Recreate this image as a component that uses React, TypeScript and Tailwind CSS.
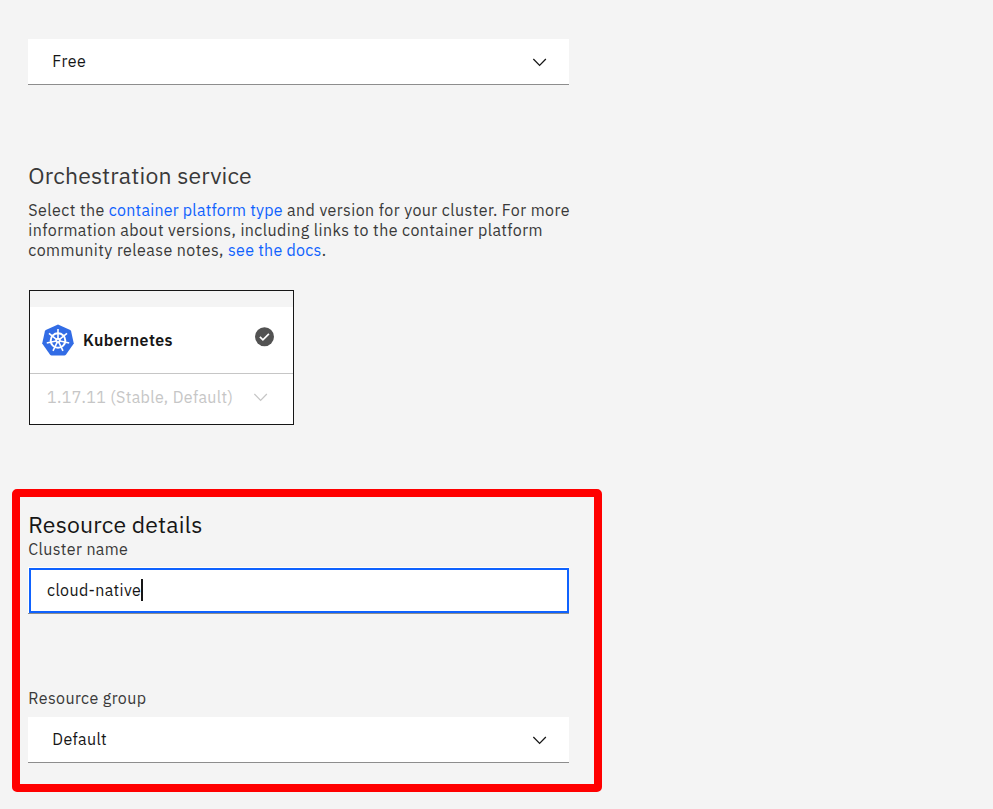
import type { ReactNode } from 'react';

function Chevron({ className }: { className: string }) {
  return (
    <svg className={className} width="16" height="16" viewBox="0 0 16 16" fill="currentColor">
      <path d="M7.6 12.2 .9 5.5 1.8 4.6 7.6 10.4 13.4 4.6 14.3 5.5Z" />
    </svg>
  );
}

function Select({ children }: { children: ReactNode }) {
  return (
    <div className="flex h-[46px] w-[541px] items-center justify-between border-b border-[#8d8d8d] bg-white pr-[21px] pl-[24.3px] text-[#161616]">
      <span className="pb-0.5">{children}</span>
      <Chevron className="mt-px" />
    </div>
  );
}

function KubernetesLogo() {
  const spokes = [0, 1, 2, 3, 4, 5, 6];
  return (
    <svg width="32" height="32" viewBox="0 0 32 32">
      <path
        d="M16 .4 28.2 6.1Q28.9 6.5 29.1 7.3L31.8 19.5 23.9 30.7Q23.3 31.4 22.4 31.4H9.6Q8.7 31.4 8.1 30.7L.2 19.5 2.9 7.3Q3.1 6.5 3.8 6.1Z"
        fill="#326ce5"
      />
      <g fill="none" stroke="#fff">
        <circle cx="16" cy="16.5" r="7.3" strokeWidth="2" />
        {spokes.map((i) => (
          <path key={i} d="M16 14.5V5" strokeWidth="1.6" transform={`rotate(${(i * 360) / 7} 16 16.5)`} />
        ))}
      </g>
      <circle cx="16" cy="16.5" r="2.7" fill="#fff" />
      <circle cx="16" cy="16.5" r="0.8" fill="#326ce5" />
    </svg>
  );
}

export default function App() {
  return (
    <main className="h-[809px] w-[993px] overflow-hidden bg-[#f4f4f4] pt-[39px] font-['IBM_Plex_Sans',Roboto,sans-serif] text-[16px] leading-5 text-[#393939]">
      <div className="pl-7">
        <Select>
          <span className="tracking-[0.5px]">Free</span>
        </Select>
        <h2 className="mt-[76px] pl-[0.3px] text-[23px] leading-7 tracking-[0.15px]">Orchestration service</h2>
        <p className="mt-[11px] pl-[0.3px] whitespace-nowrap">
          <span className="block tracking-[0.42px]">
            Select the <a className="tracking-[0.23px] text-[#0f62fe]">container platform type</a> and version for your cluster. For more
          </span>
          <span className="block tracking-[0.42px]">information about versions, including links to the container platform</span>
          <span className="block tracking-[0.42px]">
            community release notes, <a className="tracking-[0.26px] text-[#0f62fe]">see the docs</a>.
          </span>
        </p>
        <section className="mt-[30px] ml-px flex h-[135px] w-[265px] flex-col border border-[#161616] bg-white">
          <div className="h-4 bg-[#f4f4f4]" />
          <div className="flex h-[67px] items-center border-b border-[#c6c6c6] pl-3">
            <KubernetesLogo />
            <span className="ml-[9px] w-[172px] font-semibold tracking-[0.4px] text-[#161616]">Kubernetes</span>
            <svg className="-mt-[7px]" width="20" height="20" viewBox="0 0 20 20">
              <circle cx="9.5" cy="9.7" r="9.5" fill="#525252" />
              <path d="m4.9 9.9 3 3 6-6" fill="none" stroke="#fff" strokeWidth="1.7" />
            </svg>
          </div>
          <div className="flex flex-1 items-center pb-1 pl-[17px] text-[#c6c6c6]">
            <span className="w-[206px] whitespace-nowrap tracking-[0.36px]">1.17.11 (Stable, Default)</span>
            <Chevron className="-mt-px" />
          </div>
        </section>
      </div>
      <section className="mt-16 ml-3 h-[303px] w-[590px] rounded-[5px] border-8 border-[#ff0000] pt-[13px] pl-2">
        <h2 className="pl-[0.3px] text-[23px] leading-7 tracking-[0.17px] text-[#161616]">Resource details</h2>
        <div className="mt-px pl-[0.3px] tracking-[0.38px]">Cluster name</div>
        <div className="mt-2 h-[47px] w-[541px] border-b border-[#8d8d8d] bg-white pt-px pl-px">
          <div className="flex h-[45px] items-center border-2 border-[#0f62fe] pb-px pl-4 text-[#161616]">
            <span className="pb-px tracking-[0.36px]">cloud-native</span>
            <span className="h-[22px] w-[2px] bg-[#161616]" />
          </div>
        </div>
        <div className="mt-[74px] pl-[0.3px] tracking-[0.4px]">Resource group</div>
        <div className="mt-[9px]">
          <Select>
            <span className="tracking-[0.35px]">Default</span>
          </Select>
        </div>
      </section>
    </main>
  );
}
